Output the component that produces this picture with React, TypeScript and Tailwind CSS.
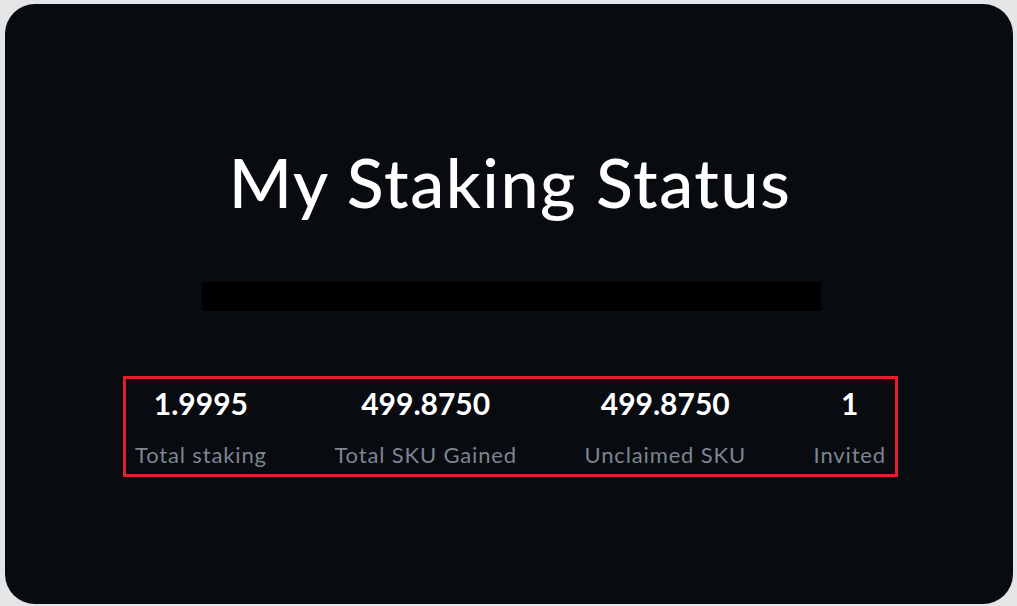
import React from 'react';

const stats = [
  { value: '1.9995', label: 'Total staking' },
  { value: '499.8750', label: 'Total SKU Gained' },
  { value: '499.8750', label: 'Unclaimed SKU' },
  { value: '1', label: 'Invited' },
];

export default function App() {
  return (
    <div className="w-[1017px] h-[606px] bg-[#e4e5e7] p-[4px_4px_2px_5px]" style={{ fontFamily: 'Lato, "Noto Sans", sans-serif' }}>
      <div className="h-full w-full rounded-[30px] bg-[#080b0f] flex flex-col items-center">
        <h1 className="mt-[134px] ml-[2px] text-[68px] leading-[88px] font-medium text-white tracking-[1.6px]">My Staking Status</h1>
        <div className="mt-[56px] ml-[4px] w-[619px] h-[29px] bg-black" />
        <div className="mt-[65px] ml-[3px] w-[775px] h-[101px] border-[3px] border-[#e41e2b] px-[9px] flex justify-between">
          {stats.map((s, i) => (
            <div key={i} className="flex flex-col items-center">
              <div className="mt-[6px] text-[30px] leading-[36px] font-bold text-white">{s.value}</div>
              <div className="mt-[20px] text-[22px] leading-[28px] text-[#7c8591] tracking-[0.85px]">{s.label}</div>
            </div>
          ))}
        </div>
      </div>
    </div>
  );
}
